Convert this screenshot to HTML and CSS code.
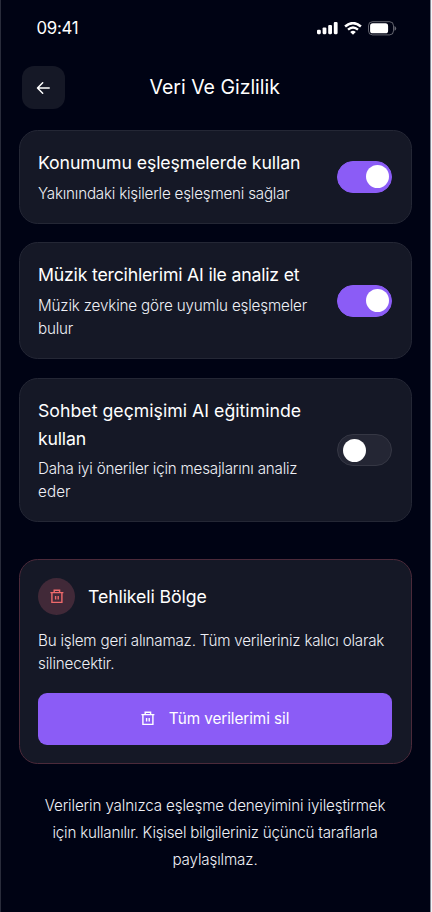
FILE: index.html
```
<!DOCTYPE html>
<html lang="tr">
<head>
<meta charset="utf-8">
<title>Veri Ve Gizlilik</title>
<link rel="stylesheet" href="styles.css">
</head>
<body>
<main class="screen">
  <header class="status">
    <span class="time">09:41</span>
    <div class="indicators">
      <svg width="21" height="13" viewBox="0 0 21 13" fill="#fff"><rect x="0" y="7.8" width="3.8" height="4.4" rx="1.1"/><rect x="5.6" y="5.5" width="3.8" height="6.7" rx="1.1"/><rect x="11.2" y="3" width="3.8" height="9.2" rx="1.1"/><rect x="16.8" y="0" width="3.8" height="12.2" rx="1.1"/></svg>
      <svg class="wifi" width="18" height="13" viewBox="0 0 18 13" fill="none" stroke="#fff"><path d="M1.1 4.5Q9-2.3 16.9 4.5" stroke-width="2.5"/><path d="M4 7.7Q9 3.3 14 7.7" stroke-width="2.3"/><path d="M6.2 9.9Q9 7.8 11.8 9.9L9 12.7Z" fill="#fff" stroke="none"/></svg>
      <svg class="battery" width="29" height="15" viewBox="0 0 29 15"><rect x=".5" y=".7" width="25" height="13.2" rx="4" fill="none" stroke="#fff" stroke-opacity=".38"/><rect x="2.1" y="2.3" width="18" height="10" rx="2.6" fill="#fff"/><path d="M26.5 5v4.8Q28.2 9 28.2 7.4T26.5 5Z" fill="#fff" opacity=".4"/></svg>
    </div>
  </header>

  <nav class="topbar">
    <button class="back" aria-label="Geri"><svg width="15" height="14" viewBox="0 0 15 14" fill="none" stroke="#fff" stroke-width="1.5" stroke-linecap="round" stroke-linejoin="round"><path d="M13.2 7H1.6M6.7 1.8 1.5 7 6.7 12.2"/></svg></button>
    <h1>Veri Ve Gizlilik</h1>
  </nav>

  <section class="card setting">
    <div class="copy">
      <h2><span class="t1">Konumumu eşleşmelerde kullan</span></h2>
      <p><span class="d1">Yakınındaki kişilerle eşleşmeni sağlar</span></p>
    </div>
    <span class="toggle on"></span>
  </section>

  <section class="card setting">
    <div class="copy">
      <h2><span class="t2">Müzik tercihlerimi AI ile analiz et</span></h2>
      <p><span class="d2">Müzik zevkine göre uyumlu eşleşmeler</span> <span class="d1">bulur</span></p>
    </div>
    <span class="toggle on"></span>
  </section>

  <section class="card setting">
    <div class="copy">
      <h2><span class="t3">Sohbet geçmişimi AI eğitiminde</span> <span class="t4">kullan</span></h2>
      <p><span class="d1">Daha iyi öneriler için mesajlarını analiz</span> <span class="d3">eder</span></p>
    </div>
    <span class="toggle"></span>
  </section>

  <section class="card danger">
    <div class="danger-head">
      <span class="badge"><svg width="14" height="15" viewBox="0 0 14 15" fill="none" stroke="#f06a6b" stroke-width="1.4"><path d="M.4 3.6H13.4M4.2 3.4V1.2H9.6V3.4M1.9 3.8V13.4H11.9V3.8M5.6 7V10.4M8.2 7V10.4"/></svg></span>
      <h2><span class="t5">Tehlikeli Bölge</span></h2>
    </div>
    <p><span class="d1">Bu işlem geri alınamaz. Tüm verileriniz kalıcı olarak</span> <span class="d2">silinecektir.</span></p>
    <button class="delete">
      <svg width="14" height="15" viewBox="0 0 14 15" fill="none" stroke="#fff" stroke-width="1.4"><path d="M.4 3.6H13.4M4.2 3.4V1.2H9.6V3.4M1.9 3.8V13.4H11.9V3.8M5.6 7V10.4M8.2 7V10.4"/></svg>
      <span>Tüm verilerimi sil</span>
    </button>
  </section>

  <p class="note"><span class="d4">Verilerin yalnızca eşleşme deneyimini iyileştirmek</span> <span class="d5">için kullanılır. Kişisel bilgileriniz üçüncü taraflarla</span> <span class="d4">paylaşılmaz.</span></p>
</main>
</body>
</html>
```
FILE: styles.css
```
* { box-sizing: border-box; }
body {
  margin: 0;
  background: #000314;
  color: #fff;
  font-family: Inter, "Noto Sans", sans-serif;
}
.screen {
  width: 431px;
  height: 912px;
  overflow: hidden;
  padding: 0 18.5px 0 17.5px;
  border-left: 1px solid #292c3b;
  border-right: 1px solid #858894;
  background: #000314;
  box-shadow: 1px 0 #f4f5f8;
}
h1, h2, p { margin: 0; }
p span, h2 span { white-space: nowrap; }
button { border: 0; padding: 0; color: inherit; font-family: inherit; }
svg { display: block; flex: none; }

.status {
  display: flex;
  justify-content: space-between;
  align-items: center;
  height: 56px;
  padding: 0 14.5px 0 18px;
}
.time { font-size: 16.8px; font-weight: 400; letter-spacing: -0.25px; }
.indicators { display: flex; align-items: center; }
.wifi { margin-left: 6px; }
.battery { margin-left: 6px; }

.topbar {
  display: grid;
  grid-template-columns: 43px 1fr 43px;
  align-items: center;
  height: 43px;
  margin: 10px 4px 21px 3.5px;
}
.back {
  display: flex;
  align-items: center;
  justify-content: center;
  width: 43px;
  height: 43px;
  border-radius: 12px;
  background: #151826;
}
h1 { text-align: center; font-size: 19.5px; line-height: 24px; margin-top: -1px; font-weight: 400; letter-spacing: -0.02px; }

.card {
  margin-bottom: 18.5px;
  border: 1px solid #242735;
  border-radius: 18.6px;
  background: #151826;
  padding: 18px 18.5px;
}
.setting { display: flex; align-items: center; justify-content: space-between; }
.copy { width: 276px; }
h2 { font-size: 17.7px; font-weight: 400; line-height: 28px; }
.card p { font-size: 15.2px; font-weight: 300; line-height: 23.2px; color: #eff0f6; }
.setting p { margin-top: 4.6px; }
.setting:nth-of-type(3) p { margin-top: 4px; }

.toggle {
  display: flex;
  align-items: center;
  flex: none;
  width: 55px;
  height: 32px;
  padding: 0 5px;
  border: 1px solid #353744;
  border-radius: 16px;
  background: #242634;
}
.toggle::before {
  content: "";
  width: 23px;
  height: 23px;
  border-radius: 50%;
  background: #fff;
}
.toggle.on {
  justify-content: flex-end;
  padding-right: 2px;
  border-color: #8b5cf6;
  background: #8b5cf6;
}

.danger { margin-top: 37px; margin-bottom: 28px; border-color: #4b2a3a; }
.danger-head { display: flex; align-items: center; gap: 13px; margin-bottom: 13.5px; }
.badge {
  display: flex;
  align-items: center;
  justify-content: center;
  width: 37px;
  height: 37px;
  border-radius: 50%;
  background: #412938;
}
.delete {
  display: flex;
  align-items: center;
  justify-content: center;
  gap: 14px;
  width: 100%;
  height: 51.5px;
  margin-top: 18px;
  border-radius: 9px;
  background: #8b5cf6;
  font-size: 15.3px;
  font-weight: 400;
  letter-spacing: -0.08px;
}
.note { text-align: center; font-size: 15.2px; font-weight: 300; line-height: 27px; color: #eff0f6; }

.t1 { letter-spacing: -0.1px; }
.t2 { letter-spacing: -0.2px; }
.t3 { letter-spacing: 0.02px; }
.t4 { letter-spacing: -0.2px; }
.t5 { letter-spacing: -0.1px; }
.d1 { letter-spacing: -0.21px; }
.d2 { letter-spacing: -0.16px; }
.d3 { letter-spacing: 0.1px; }
.d4 { letter-spacing: -0.14px; }
.d5 { letter-spacing: -0.22px; }
```
